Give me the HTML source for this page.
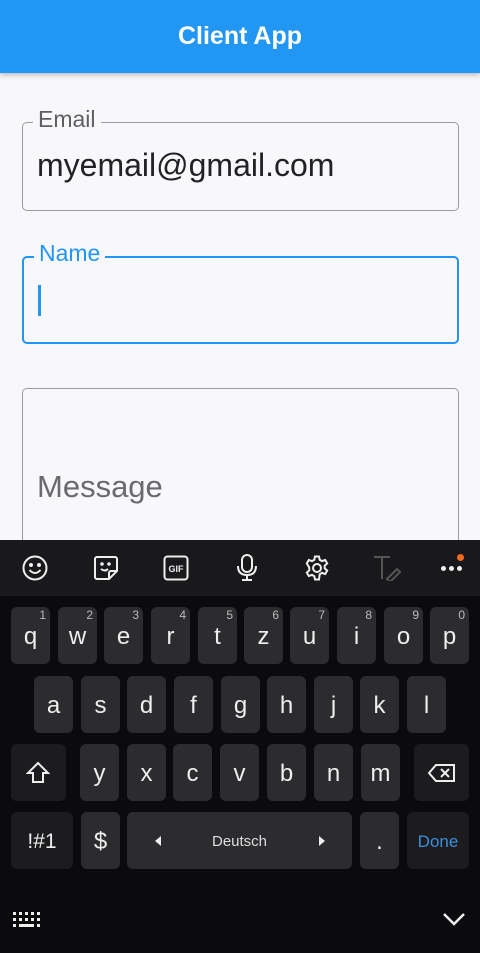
<!DOCTYPE html>
<html><head><meta charset="utf-8"><style>
*{margin:0;padding:0;box-sizing:border-box}
body{width:480px;height:953px;overflow:hidden;background:#f8f7fc;font-family:"Liberation Sans",sans-serif;position:relative}
.hdr{position:absolute;left:0;top:0;width:480px;height:73px;background:#2196f3;box-shadow:0 2px 5px rgba(0,0,0,.25);color:#fff;font-size:25px;font-weight:bold;text-align:center;line-height:73px}
.box{position:absolute;left:22px;width:437px;border:1.5px solid #9a9a9a;border-radius:5px}
.lbl{position:absolute;left:10px;top:-17px;padding:0 5px;background:#f8f7fc;font-size:23px;color:#5f5f5f;line-height:26px}
.kb{position:absolute;left:0;top:540px;width:480px;height:413px;background:#0b0a0d}
.tb{position:absolute;left:0;top:0;width:480px;height:56px;background:#19181b}
.k{position:absolute;width:39px;height:57px;background:#2c2b2e;border-radius:6px;color:#eee;font-size:24px;text-align:center;line-height:60px}
.k sup{position:absolute;right:4px;top:-22px;font-size:12px;color:#bbb}
.f{background:#1c1b1e}
svg{position:absolute}
</style></head><body>
<div class="hdr">Client App</div>
<div class="box" style="top:122px;height:89px"><div class="lbl">Email</div>
<div style="position:absolute;left:14px;top:24px;font-size:32px;color:#222">myemail@gmail.com</div></div>
<div class="box" style="top:256px;height:88px;border:2px solid #2196f3"><div class="lbl" style="color:#2196f3;top:-18px">Name</div>
<div style="position:absolute;left:14px;top:27px;width:2.5px;height:31px;background:#2196f3"></div></div>
<div class="box" style="top:388px;height:200px"><div style="position:absolute;left:14px;top:80px;font-size:31px;color:#6a6a6a">Message</div></div>
<div class="kb">
<div class="tb">
<svg style="left:22px;top:15px" width="26" height="26" viewBox="0 0 26 26" fill="none" stroke="#eee" stroke-width="2"><circle cx="13" cy="13" r="11.5"/><circle cx="9" cy="10" r="1" fill="#eee"/><circle cx="17" cy="10" r="1" fill="#eee"/><path d="M7.5 15q5.5 6 11 0"/></svg>
<svg style="left:93px;top:15px" width="26" height="26" viewBox="0 0 26 26" fill="none" stroke="#eee" stroke-width="2"><path d="M4 2h18a2 2 0 0 1 2 2v12l-8 8H4a2 2 0 0 1-2-2V4a2 2 0 0 1 2-2z"/><path d="M16 24v-6a2 2 0 0 1 2-2h6"/><circle cx="9" cy="9" r=".8" fill="#eee"/><circle cx="16" cy="9" r=".8" fill="#eee"/><path d="M8 14q4 3 7 0"/></svg>
<svg style="left:163px;top:15px" width="26" height="26" viewBox="0 0 26 26" fill="none" stroke="#eee" stroke-width="2"><rect x="1.5" y="1.5" width="23" height="23" rx="3"/><text x="13" y="17" font-size="9" font-weight="bold" fill="#eee" stroke="none" text-anchor="middle" font-family="Liberation Sans">GIF</text></svg>
<svg style="left:236px;top:14px" width="22" height="28" viewBox="0 0 22 28" fill="none" stroke="#eee" stroke-width="2"><rect x="6" y="1" width="10" height="17" rx="5"/><path d="M2 12q0 9 9 9q9 0 9-9M11 21v4M6 26h10"/></svg>
<svg style="left:304px;top:15px" width="26" height="26" viewBox="0 0 26 26" fill="none" stroke="#eee" stroke-width="2"><circle cx="13" cy="13" r="4"/><path d="M11 1.5h4l.7 3.3 2.3 1.3 3.2-1.1 2 3.4-2.5 2.3v2.6l2.5 2.3-2 3.4-3.2-1.1-2.3 1.3L15 24.5h-4l-.7-3.3-2.3-1.3-3.2 1.1-2-3.4 2.5-2.3v-2.6L2.8 8.4l2-3.4 3.2 1.1 2.3-1.3z"/></svg>
<svg style="left:373px;top:15px" width="30" height="26" viewBox="0 0 30 26" fill="none" stroke="#555" stroke-width="2"><path d="M1 2h16M9 2v22M14 24l10-10 3 3-10 10z"/></svg>
<div style="position:absolute;left:441px;top:26px;width:5px;height:5px;border-radius:50%;background:#eee;box-shadow:8px 0 #eee,16px 0 #eee"></div>
<div style="position:absolute;left:457px;top:14px;width:7px;height:7px;border-radius:50%;background:#f26b1d"></div>
</div>
<div class="k" style="left:11px;top:67px">q<sup>1</sup></div>
<div class="k" style="left:58px;top:67px">w<sup>2</sup></div>
<div class="k" style="left:104px;top:67px">e<sup>3</sup></div>
<div class="k" style="left:151px;top:67px">r<sup>4</sup></div>
<div class="k" style="left:198px;top:67px">t<sup>5</sup></div>
<div class="k" style="left:244px;top:67px">z<sup>6</sup></div>
<div class="k" style="left:290px;top:67px">u<sup>7</sup></div>
<div class="k" style="left:337px;top:67px">i<sup>8</sup></div>
<div class="k" style="left:384px;top:67px">o<sup>9</sup></div>
<div class="k" style="left:430px;top:67px">p<sup>0</sup></div>
<div class="k" style="left:34px;top:136px">a</div>
<div class="k" style="left:81px;top:136px">s</div>
<div class="k" style="left:127px;top:136px">d</div>
<div class="k" style="left:174px;top:136px">f</div>
<div class="k" style="left:221px;top:136px">g</div>
<div class="k" style="left:267px;top:136px">h</div>
<div class="k" style="left:314px;top:136px">j</div>
<div class="k" style="left:360px;top:136px">k</div>
<div class="k" style="left:407px;top:136px">l</div>
<div class="k f" style="left:11px;top:204px;width:55px"><svg style="left:15px;top:17px" width="24" height="24" viewBox="0 0 24 24" fill="none" stroke="#eee" stroke-width="2"><path d="M12 2L2 12h5v9h10v-9h5z"/></svg></div>
<div class="k" style="left:80px;top:204px">y</div>
<div class="k" style="left:127px;top:204px">x</div>
<div class="k" style="left:173px;top:204px">c</div>
<div class="k" style="left:220px;top:204px">v</div>
<div class="k" style="left:267px;top:204px">b</div>
<div class="k" style="left:314px;top:204px">n</div>
<div class="k" style="left:361px;top:204px">m</div>
<div class="k f" style="left:414px;top:204px;width:55px"><svg style="left:14px;top:20px" width="28" height="18" viewBox="0 0 28 18" fill="none" stroke="#eee" stroke-width="2"><path d="M8 1h18v16H8L1 9z"/><path d="M13 5l8 8M21 5l-8 8"/></svg></div>
<div class="k f" style="left:11px;top:272px;width:62px;font-size:21px">!#1</div>
<div class="k" style="left:81px;top:272px">$</div>
<div class="k" style="left:127px;top:272px;width:225px;font-size:15px;color:#ddd">Deutsch
<svg style="left:28px;top:24px" width="6" height="10"><path d="M6 0v10L0 5z" fill="#eee"/></svg>
<svg style="left:192px;top:24px" width="6" height="10"><path d="M0 0v10L6 5z" fill="#eee"/></svg></div>
<div class="k" style="left:360px;top:272px">.</div>
<div class="k f" style="left:407px;top:272px;width:62px;font-size:17px;color:#3b8fdd">Done</div>
<svg style="left:13px;top:372px" width="28" height="16"><g fill="#eee"><rect x="0" y="0" width="3" height="3"/><rect x="6" y="0" width="3" height="3"/><rect x="12" y="0" width="3" height="3"/><rect x="18" y="0" width="3" height="3"/><rect x="24" y="0" width="3" height="3"/><rect x="0" y="6" width="3" height="3"/><rect x="6" y="6" width="3" height="3"/><rect x="12" y="6" width="3" height="3"/><rect x="18" y="6" width="3" height="3"/><rect x="24" y="6" width="3" height="3"/><rect x="0" y="12" width="3" height="3"/><rect x="6" y="12" width="15" height="3"/><rect x="24" y="12" width="3" height="3"/></g></svg>
<svg style="left:443px;top:373px" width="22" height="14" fill="none" stroke="#eee" stroke-width="2.5"><path d="M1 1l10 10L21 1"/></svg>
</div>
</body></html>
